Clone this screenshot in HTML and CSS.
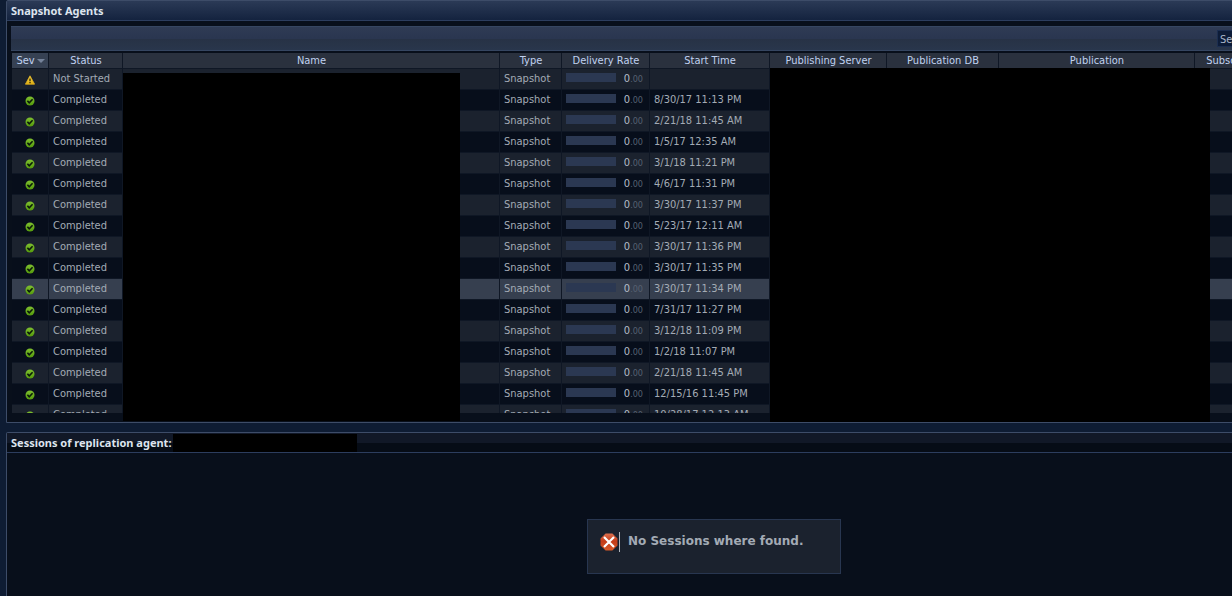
FILE: index.html
```html
<!DOCTYPE html>
<html lang="en">
<head>
  <meta charset="UTF-8">
  <meta name="viewport" content="width=device-width, initial-scale=1.0">
  <title>Snapshot Agents</title>
  <link rel="stylesheet" href="styles.css">
</head>
<body>
  <!-- Shared icons -->
  <svg class="sprite" aria-hidden="true">
    <defs>
      <linearGradient id="green" x1="0" y1="0" x2="0" y2="1">
        <stop offset="0" stop-color="#7fc030"/>
        <stop offset="1" stop-color="#559a0c"/>
      </linearGradient>
      <linearGradient id="yellow" x1="0" y1="0" x2="0" y2="1">
        <stop offset="0" stop-color="#f6dc5a"/>
        <stop offset="1" stop-color="#e0ac0c"/>
      </linearGradient>
      <linearGradient id="red" x1="0" y1="0" x2="0" y2="1">
        <stop offset="0" stop-color="#dc7050"/>
        <stop offset="0.45" stop-color="#c43c18"/>
        <stop offset="1" stop-color="#d85a28"/>
      </linearGradient>
    </defs>
    <symbol id="icon-ok" viewBox="0 0 10 10">
      <circle cx="5" cy="5" r="4.5" fill="url(#green)"/>
      <path d="M2.4 4.8l1.8 2 3.4-3.6" fill="none" stroke="#0b1a08" stroke-width="1.6"/>
    </symbol>
    <symbol id="icon-warning" viewBox="0 0 10 10">
      <path d="M5 0.8L9.6 9.2H0.4z" fill="url(#yellow)" stroke="#e0b020" stroke-width="0.8" stroke-linejoin="round"/>
      <path d="M4.4 3.6h1.2v2.6H4.4zM4.4 7.1h1.2v1.1H4.4z" fill="#1c1808"/>
    </symbol>
    <symbol id="icon-error" viewBox="0 0 18 18">
      <path d="M5.6 0.5h6.8l5.1 5.1v6.8l-5.1 5.1H5.6L0.5 12.4V5.6z" fill="url(#red)"/>
      <path d="M4 4l10 10M14 4L4 14" stroke="#fff" stroke-width="2.2"/>
    </symbol>
  </svg>

  <main class="page">
    <section class="panel">
      <h2 class="panel-title">Snapshot Agents</h2>
      <div class="panel-body">
        <div class="toolbar">
          <input class="search" type="text" placeholder="Search" aria-label="Search">
        </div>
        <div class="grid">
          <table>
            <colgroup>
              <col class="col-sev">
              <col class="col-status">
              <col class="col-name">
              <col class="col-type">
              <col class="col-rate">
              <col class="col-time">
              <col class="col-server">
              <col class="col-db">
              <col class="col-publication">
              <col class="col-subscriber">
              <col>
            </colgroup>
            <thead>
              <tr>
                <th class="sorted">Sev<span class="arrow"></span></th>
                <th>Status</th>
                <th>Name</th>
                <th>Type</th>
                <th>Delivery Rate</th>
                <th>Start Time</th>
                <th>Publishing Server</th>
                <th>Publication DB</th>
                <th>Publication</th>
                <th>Subscribing Server</th>
                <th>Subscription DB</th>
              </tr>
            </thead>
            <tbody id="agents"></tbody>
          </table>
        </div>
        <div class="mask mask-name"></div>
        <div class="mask mask-publication"></div>
      </div>
    </section>

    <section class="panel sessions">
      <h2 class="panel-title">Sessions of replication agent: <span class="agent-name"></span></h2>
      <div class="sessions-body">
        <div class="message">
          <svg class="message-icon" aria-hidden="true"><use href="#icon-error"/></svg>
          <p>No Sessions where found.</p>
        </div>
      </div>
    </section>
  </main>

  <script>
    const startTimes = [
      "", "8/30/17 11:13 PM", "2/21/18 11:45 AM", "1/5/17 12:35 AM",
      "3/1/18 11:21 PM", "4/6/17 11:31 PM", "3/30/17 11:37 PM",
      "5/23/17 12:11 AM", "3/30/17 11:36 PM", "3/30/17 11:35 PM",
      "3/30/17 11:34 PM", "7/31/17 11:27 PM", "3/12/18 11:09 PM",
      "1/2/18 11:07 PM", "2/21/18 11:45 AM", "12/15/16 11:45 PM",
      "10/28/17 12:13 AM"
    ];
    const selected = 10;

    // One row per agent, an agent without a start time has not run yet
    document.getElementById("agents").innerHTML = startTimes.map((time, i) => `
      <tr class="${i === selected ? "selected" : ""}">
        <td class="sev"><svg class="icon"><use href="#${time ? "icon-ok" : "icon-warning"}"/></svg></td>
        <td>${time ? "Completed" : "Not Started"}</td>
        <td></td>
        <td>Snapshot</td>
        <td><div class="rate"><span class="bar"></span><span>0<span class="decimals">.00</span></span></div></td>
        <td>${time}</td>
        <td></td><td></td><td></td><td></td><td></td>
      </tr>`).join("");
  </script>
</body>
</html>
```

FILE: styles.css
```css
* {
  box-sizing: border-box;
}

body {
  margin: 0;
  background-color: #0e1c33;
  color: #a3abb5;
  font-family: "DejaVu Sans Condensed", "Noto Sans", sans-serif;
  font-size: 11px;
  overflow: hidden;
}

.sprite {
  position: absolute;
  width: 0;
  height: 0;
}

.page {
  display: flex;
  flex-direction: column;
  gap: 9px;
  min-width: 1428px;
  height: 100vh;
  padding: 0 6px;
}

/* Panels */
.panel {
  border: 1px solid #3d4c68;
  border-radius: 2px 2px 0 0;
  background-color: #080f1b;
}

.panel-title {
  height: 20px;
  margin: 0;
  padding: 0 4px;
  border-bottom: 1px solid #2c3d5e;
  background: linear-gradient(#2b3a56, #14233f);
  color: #dde4ee;
  font-family: "Noto Sans", sans-serif;
  font-size: 11px;
  font-weight: bold;
  line-height: 20px;
  white-space: nowrap;
}

.panel-body {
  position: relative;
  padding: 5px 4px 9px;
}

.toolbar {
  display: flex;
  justify-content: flex-end;
  height: 25px;
  margin-bottom: 2px;
  padding: 3px;
  border-top: 1px solid #364661;
  border-bottom: 1px solid #364661;
  background: linear-gradient(#2f3b54, #2a3650 50%, #273245 50%, #29364c);
}

.search {
  width: 197px;
  height: 17px;
  padding: 1px 2px 0;
  border: 1px solid #1c2e50;
  background-color: #0d1c38;
  color: #a9b6c8;
  font: inherit;
}

.search::placeholder {
  color: #a9b6c8;
}

/* Agents table */
.grid {
  height: 360px;
  padding-left: 1px;
  overflow: hidden;
}

table {
  width: 100%;
  table-layout: fixed;
  border-collapse: separate;
  border-spacing: 0;
}

.col-sev { width: 37px; }
.col-status { width: 74px; }
.col-name { width: 377px; }
.col-type { width: 62px; }
.col-rate { width: 88px; }
.col-time { width: 120px; }
.col-server { width: 117px; }
.col-db { width: 112px; }
.col-publication { width: 196px; }
.col-subscriber { width: 116px; }

th,
td {
  border-right: 1px solid #0f1725;
  border-bottom: 1px solid #0f1725;
  white-space: nowrap;
}

th {
  height: 16px;
  padding: 1px 0 0 1px;
  background-color: #2a313e;
  color: #c0d2f0;
  font-weight: normal;
  line-height: 14px;
}

th.sorted {
  background-color: #364153;
}

.arrow {
  display: inline-block;
  margin-left: 2px;
  border: 4px solid transparent;
  border-top-color: #75839a;
  border-bottom: 0;
  vertical-align: 1px;
}

td {
  height: 21px;
  padding: 1px 4px;
  background-color: #1b222e;
  line-height: 18px;
}

tbody tr:nth-child(even) td {
  background-color: #070e1b;
}

tbody tr.selected td {
  background-color: #363f4f;
}

.sev {
  text-align: center;
}

.icon {
  display: block;
  width: 10px;
  height: 10px;
  margin: 2px auto 0;
}

.rate {
  display: flex;
  align-items: flex-start;
  justify-content: space-between;
  padding-right: 2px;
  color: #b4bcc6;
}

.bar {
  width: 50px;
  height: 9px;
  margin-top: 3px;
  background-color: #2b3852;
}

.decimals {
  color: #566171;
  font-size: 9px;
}

/* Blacked out areas over the table */
.mask {
  position: absolute;
  background-color: #000;
}

.mask-name {
  top: 52px;
  left: 116px;
  width: 337px;
  height: 348px;
}

.mask-publication {
  top: 47px;
  left: 763px;
  width: 440px;
  height: 354px;
}

/* Sessions */
.sessions {
  display: flex;
  flex: 1;
  flex-direction: column;
  border-bottom: 0;
}

.sessions .panel-title {
  display: flex;
  align-items: center;
  gap: 2px;
  background: linear-gradient(#111827 50%, #060c16 50%);
}

.agent-name {
  width: 184px;
  height: 18px;
  background-color: #000;
}

.sessions-body {
  display: flex;
  flex: 1;
  align-items: flex-start;
  justify-content: center;
  padding-top: 66px;
}

.message {
  display: flex;
  align-items: flex-start;
  width: 254px;
  height: 55px;
  padding: 12px;
  border: 1px solid #283650;
  background-color: #1b222e;
}

.message-icon {
  width: 18px;
  height: 18px;
  margin-top: 1px;
}

.message p {
  height: 20px;
  margin: 0 0 0 1px;
  padding-left: 8px;
  border-left: 1px solid #b0b5bc;
  font-family: "DejaVu Sans", sans-serif;
  font-size: 12px;
  font-weight: bold;
  line-height: 18px;
}
```
